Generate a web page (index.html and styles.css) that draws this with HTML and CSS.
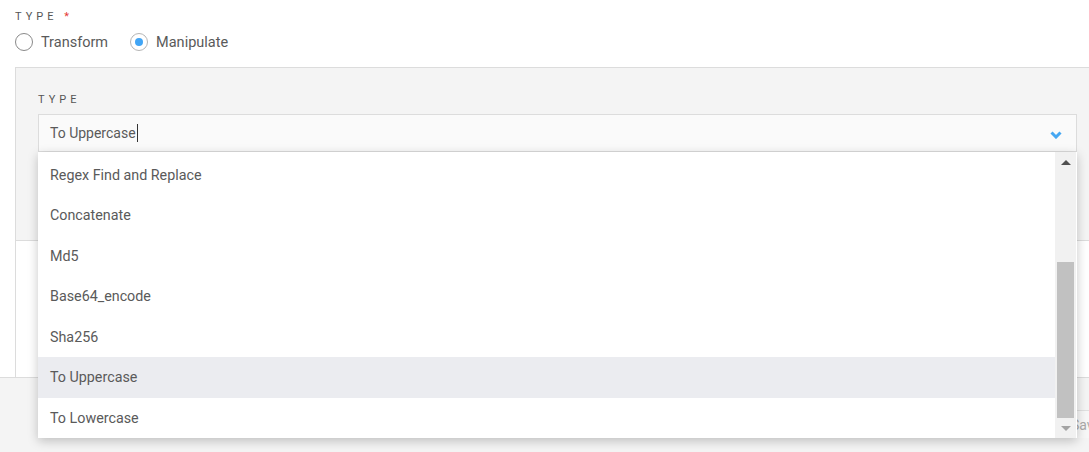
FILE: index.html
```html
<!DOCTYPE html>
<html lang="en">

<head>
    <meta charset="UTF-8">
    <meta name="viewport" content="width=device-width, initial-scale=1.0">
    <title>Mapping type</title>
    <link rel="stylesheet" href="styles.css">
</head>

<body>
    <div id="form">
        <div class="field-label">Type <span class="req">*</span></div>
        <div class="radio-row">
            <label class="radio"><span class="dot"></span>Transform</label>
            <label class="radio checked"><span class="dot"></span>Manipulate</label>
        </div>

        <div class="panel">
            <div class="field-label">Type</div>
            <div class="select">
                <div class="select-value">To Uppercase<span class="caret"></span></div>
                <svg class="chevron" width="12" height="8" viewBox="0 0 12 8">
                    <polyline points="1.5,1.5 6,6 10.5,1.5" fill="none" stroke="#45a7f2" stroke-width="3" stroke-linejoin="miter" />
                </svg>

                <div class="dropdown">
                    <ul class="options">
                        <li>Regex Find and Replace</li>
                        <li>Concatenate</li>
                        <li>Md5</li>
                        <li>Base64_encode</li>
                        <li>Sha256</li>
                        <li class="hover">To Uppercase</li>
                        <li>To Lowercase</li>
                    </ul>
                    <div class="scrollbar">
                        <div class="arrow up"></div>
                        <div class="track"><div class="thumb"></div></div>
                        <div class="arrow down"></div>
                    </div>
                </div>
            </div>
        </div>

        <div class="section"></div>
    </div>

    <div class="footer">
        <button class="btn-save" disabled>Save</button>
    </div>
</body>

</html>
```

FILE: styles.css
```css
*{
    margin: 0;
    padding: 0;
    box-sizing: border-box;
}
html,body{
    overflow: hidden;
}
body{
    font-family: Roboto, "Noto Sans", sans-serif;
    color: #5a5a5a;
    background: #fff;
}
ul{
    list-style: none;
}
#form{
    padding-left: 15px;
}
.field-label{
    font-size: 11px;
    line-height: 14px;
    letter-spacing: 4px;
    text-transform: uppercase;
    color: #555;
    padding-top: 10px;
}
.field-label .req{
    color: #e53935;
}
.radio-row{
    display: flex;
    gap: 22px;
    margin-top: 8px;
    height: 20px;
    align-items: center;
}
.radio{
    display: flex;
    align-items: center;
    font-size: 14.5px;
    color: #5a5a5a;
}
.radio .dot{
    width: 18px;
    height: 18px;
    border: 1px solid #8a8a8a;
    border-radius: 50%;
    margin-right: 8px;
    display: flex;
    align-items: center;
    justify-content: center;
}
.radio.checked .dot{
    border-color: #b5b5b5;
}
.radio.checked .dot::after{
    content: "";
    width: 8px;
    height: 8px;
    border-radius: 50%;
    background: #42a5f5;
}

.panel{
    margin-top: 15px;
    background: #f4f4f4;
    border: 1px solid #dcdcdc;
    border-right: none;
    padding: 15px 12px 88px 22px;
}
.panel .field-label{
    padding-top: 10px;
    margin-bottom: 7px;
}
.select{
    position: relative;
    height: 38px;
    background: #fafafa;
    border: 1px solid #dcdcdc;
    display: flex;
    align-items: center;
    justify-content: space-between;
    padding: 0 14px 0 11px;
}
.select-value{
    font-size: 14px;
    color: #5a5a5a;
    display: flex;
    align-items: center;
}
.caret{
    display: inline-block;
    width: 1px;
    height: 18px;
    background: #333;
    margin-left: 1px;
}
.chevron{
    margin-top: 3px;
}

.dropdown{
    position: absolute;
    top: 37px;
    left: -1px;
    right: -1px;
    height: 286px;
    background: #fff;
    box-shadow: 0 3px 10px rgba(0,0,0,0.22);
    display: flex;
    z-index: 10;
}
.options{
    flex: 1;
    padding-top: 2.5px;
    overflow: hidden;
}
.options li{
    height: 40.5px;
    line-height: 40.5px;
    padding-left: 12px;
    font-size: 14.3px;
    color: #5a5a5a;
}
.options li.hover{
    background: #ebecf0;
}
.scrollbar{
    width: 21px;
    margin-right: 1px;
    background: #f1f1f1;
    display: flex;
    flex-direction: column;
}
.arrow{
    height: 20px;
    display: flex;
    justify-content: center;
    align-items: center;
}
.arrow.up::after{
    content: "";
    border-left: 5px solid transparent;
    border-right: 5px solid transparent;
    border-bottom: 5px solid #505050;
}
.arrow.down::after{
    content: "";
    border-left: 5px solid transparent;
    border-right: 5px solid transparent;
    border-top: 5px solid #a3a3a3;
}
.track{
    flex: 1;
    display: flex;
    flex-direction: column;
    justify-content: flex-end;
    padding: 0 2px;
}
.thumb{
    height: 156px;
    background: #c1c1c1;
}

.section{
    height: 136px;
    border-left: 1px solid #dcdcdc;
}
.footer{
    height: 80px;
    background: #f4f4f4;
    border-top: 1px solid #dcdcdc;
    display: flex;
    justify-content: flex-end;
    padding-top: 32px;
}
.btn-save{
    width: 60px;
    height: 28px;
    margin-right: -42px;
    background: #f7f7f7;
    border: none;
    border-top: 1px solid #e0e0e0;
    font-family: Roboto, "Noto Sans", sans-serif;
    font-size: 14px;
    color: #aaa;
    text-align: left;
    padding-left: 0;
}
```
